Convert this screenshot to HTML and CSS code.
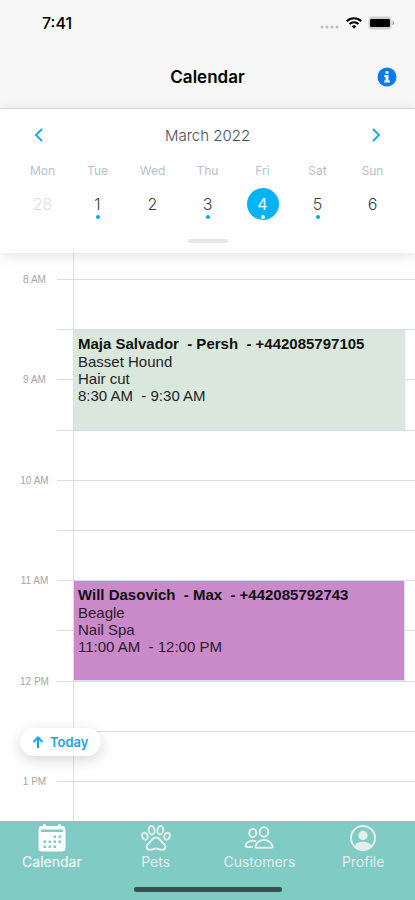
FILE: index.html
```html
<!DOCTYPE html>
<html lang="en">
<head>
<meta charset="utf-8">
<meta name="viewport" content="width=device-width, initial-scale=1">
<title>Calendar</title>
<link rel="stylesheet" href="styles.css">
</head>
<body>
<div class="app">
  <header class="header">
    <div class="status">
      <span class="clock">7:41</span>
      <div class="status-icons">
        <svg class="signal" width="20" height="4" viewBox="0 0 20 4" fill="#bcbcbc"><circle cx="2" cy="2" r="1.5"/><circle cx="7" cy="2" r="1.5"/><circle cx="12" cy="2" r="1.5"/><circle cx="17" cy="2" r="1.5"/></svg>
        <svg width="16" height="12" viewBox="0 0 16 12" fill="none" stroke="#000" stroke-width="2"><path d="M.8 4.3a10.3 10.3 0 0 1 14.4 0M3.5 7a6.5 6.5 0 0 1 9 0"/><path d="M5.7 9.3a3.4 3.4 0 0 1 4.6 0L8 11.7z" fill="#000" stroke="none"/></svg>
        <svg width="27" height="14" viewBox="0 0 27 14"><rect x=".5" y=".5" width="23" height="13" rx="4" fill="#cfcfcf"/><path d="M24.5 4.5c2 .7 2 4.300 0 5z" fill="#a8a8a8"/><rect x="2" y="3" width="20" height="8" rx="1.500" fill="#000"/></svg>
      </div>
    </div>
    <div class="titlebar">
      <h1>Calendar</h1>
      <button class="info" type="button" aria-label="Information">
        <svg width="20" height="20" viewBox="0 0 20 20"><circle cx="10" cy="10" r="9.500" fill="#087cec"/><path d="M8.500 4.200h3v2.500h-3zM7.300 8h4.200v5.500h1.300v2H7.300v-2h1.300V10H7.300z" fill="#fff"/></svg>
      </button>
    </div>
  </header>

  <section class="week">
    <div class="month">
      <button type="button" aria-label="Previous week"><svg width="12" height="14" viewBox="0 0 12 14"><path d="M9 1 3 7l6 6"/></svg></button>
      <h2>March 2022</h2>
      <button type="button" aria-label="Next week"><svg width="12" height="14" viewBox="0 0 12 14"><path d="m3 1 6 6-6 6"/></svg></button>
    </div>
    <div class="days">
      <div class="day"><span class="name">Mon</span><button class="date muted" type="button">28</button></div>
      <div class="day"><span class="name">Tue</span><button class="date marked" type="button">1</button></div>
      <div class="day"><span class="name">Wed</span><button class="date" type="button">2</button></div>
      <div class="day"><span class="name">Thu</span><button class="date marked" type="button">3</button></div>
      <div class="day"><span class="name">Fri</span><button class="date marked selected" type="button">4</button></div>
      <div class="day"><span class="name">Sat</span><button class="date marked" type="button">5</button></div>
      <div class="day"><span class="name">Sun</span><button class="date" type="button">6</button></div>
    </div>
    <div class="knob"></div>
  </section>

  <main class="timeline">
    <div class="axis"></div>
    <span class="hour at-0800">8 AM</span><div class="line at-0800"></div>
    <div class="line at-0830"></div>
    <span class="hour at-0900">9 AM</span><div class="line at-0900"></div>
    <div class="line at-0930"></div>
    <span class="hour at-1000">10 AM</span><div class="line at-1000"></div>
    <div class="line at-1030"></div>
    <span class="hour at-1100">11 AM</span><div class="line at-1100"></div>
    <div class="line at-1130"></div>
    <span class="hour at-1200">12 PM</span><div class="line at-1200"></div>
    <div class="line at-1230"></div>
    <span class="hour at-1300">1 PM</span><div class="line at-1300"></div>
    <article class="event event-green">
      <h3>Maja Salvador&nbsp; - Persh&nbsp; - +442085797105</h3>
      <p>Basset Hound</p><p>Hair cut</p><p>8:30 AM&nbsp; - 9:30 AM</p>
    </article>
    <article class="event event-purple">
      <h3>Will Dasovich&nbsp; - Max&nbsp; - +442085792743</h3>
      <p>Beagle</p><p>Nail Spa</p><p>11:00 AM&nbsp; - 12:00 PM</p>
    </article>
    <button class="today" type="button">
      <svg width="12" height="12" viewBox="0 0 12 12"><path d="M6 12V1.500M1.500 6 6 1.500 10.500 6"/></svg>Today
    </button>
  </main>

  <nav class="tabs">
    <a class="tab active" href="#calendar">
      <svg width="28" height="28" viewBox="0 0 28 28"><path fill="#fff" d="M5 .5h3V2h12V.5h3V2h1a3.500 3.500 0 0 1 3.500 3.500V24a3.500 3.500 0 0 1-3.500 3.500H4A3.500 3.500 0 0 1 .5 24V5.500A3.500 3.500 0 0 1 4 2h1z"/><path fill="#80cbc4" d="M3 5.500h22V8H3z"/><g fill="#80cbc4"><path d="M15.500 11.500H18V14h-2.500zM20.500 11.500H23V14h-2.500zM5.500 16.500H8V19H5.500zM10.500 16.500H13V19h-2.500zM15.500 16.500H18V19h-2.500zM20.500 16.500H23V19h-2.500zM5.500 21.500H8V24H5.500zM10.500 21.500H13V24h-2.500zM15.500 21.500H18V24h-2.500z"/></g></svg>
      <span>Calendar</span>
    </a>
    <a class="tab" href="#pets">
      <svg width="30" height="28" viewBox="0 0 30 28" fill="none" stroke="#e3eeed" stroke-width="2"><ellipse cx="10.700" cy="6.200" rx="2.900" ry="4.200" transform="rotate(-9 10.700 6.200)"/><ellipse cx="19.300" cy="6.200" rx="2.900" ry="4.200" transform="rotate(9 19.300 6.200)"/><ellipse cx="3.900" cy="12.200" rx="2.700" ry="3.600" transform="rotate(-20 3.900 12.200)"/><ellipse cx="26.100" cy="12.200" rx="2.700" ry="3.600" transform="rotate(20 26.100 12.200)"/><path d="M15 13.500c-2.400 0-3.700 1.300-4.800 3.200-1 1.800-4.700 3.200-4.700 6 0 2 1.500 3.100 3.500 3.100 2.300 0 3.500-1.200 6-1.200s3.700 1.200 6 1.200c2 0 3.500-1.100 3.500-3.100 0-2.800-3.700-4.200-4.700-6-1.100-1.900-2.400-3.200-4.800-3.200z"/></svg>
      <span>Pets</span>
    </a>
    <a class="tab" href="#customers">
      <svg width="30" height="28" viewBox="0 0 30 28" fill="none" stroke="#e3eeed" stroke-width="2"><ellipse cx="20" cy="8" rx="4.300" ry="4.800"/><ellipse cx="8.800" cy="9" rx="3.600" ry="4"/><path d="M20 16c-4.800 0-8 3.200-8.500 6.200-.1 1 .4 1.600 1.500 1.600h14c1.100 0 1.600-.6 1.500-1.600C28 19.200 24.800 16 20 16zM12 17.500c-1-.6-2-.8-3.200-.8-4 0-6.800 2.500-7.200 5-.1.800.4 1.300 1.300 1.300H9"/></svg>
      <span>Customers</span>
    </a>
    <a class="tab" href="#profile">
      <svg width="28" height="28" viewBox="0 0 28 28"><circle cx="14" cy="14" r="12" fill="none" stroke="#e3eeed" stroke-width="2"/><circle cx="14" cy="11.500" r="4.700" fill="#e3eeed"/><path d="M5.500 22c1.300-3 4.500-4.300 8.500-4.300s7.200 1.300 8.500 4.300A12 12 0 0 1 14 26a12 12 0 0 1-8.500-4z" fill="#e3eeed"/></svg>
      <span>Profile</span>
    </a>
    <div class="home-indicator"></div>
  </nav>
</div>
</body>
</html>
```
FILE: styles.css
```css
* { box-sizing: border-box; }
body, h1, h2, h3, p { margin: 0; }
body { font-family: Inter, "Liberation Sans", sans-serif; background: #fff; }
button { padding: 0; border: 0; background: none; font: inherit; color: inherit; }
svg { display: block; }
.app { display: flex; flex-direction: column; min-height: 100vh; }

.header { height: 109px; background: #f7f7f7; border-bottom: 1px solid #dedede; }
.status { display: flex; justify-content: space-between; align-items: center; height: 46px; padding: 0 20px 0 42px; }
.clock { font-size: 16px; font-weight: 500; }
.status-icons { display: flex; align-items: center; gap: 6px; }
.signal { margin-top: 8px; }
.titlebar { display: grid; grid-template-columns: 1fr auto 1fr; align-items: center; height: 62px; padding: 0 18px; }
.titlebar h1 { grid-column: 2; font-size: 17px; font-weight: 600; line-height: 24px; }
.info { justify-self: end; }

.week { position: relative; z-index: 1; height: 144px; background: #fff; box-shadow: 0 2px 14px rgba(0, 0, 0, 0.12); }
.month { display: flex; justify-content: space-between; align-items: center; height: 52px; padding: 0 33px; }
.month h2 { font-size: 15px; font-weight: 300; color: #43515c; }
.month path { fill: none; stroke: #19ace6; stroke-width: 2; }
.days { display: grid; grid-template-columns: repeat(7, 1fr); padding: 0 15px; }
.day { display: flex; flex-direction: column; align-items: center; gap: 7px; }
.name { font-size: 12px; line-height: 20px; font-weight: 400; color: #b6c1cd; }
.date { position: relative; width: 32px; height: 32px; border-radius: 50%; font-size: 16px; font-weight: 300; color: #36424b; }
.muted { color: #d9e1e8; }
.marked::after { content: ""; position: absolute; left: 14px; bottom: 1px; width: 4px; height: 4px; border-radius: 50%; background: #00a8ec; }
.selected { background: #00b4f3; color: #fff; font-weight: 400; }
.selected::after { background: #fff; }
.knob { width: 40px; height: 4px; margin: 19px auto 0; border-radius: 2px; background: #e4e7e9; }

/* One grid row per half hour; the first and last rows are partly scrolled off. */
.timeline { position: relative; flex: 1; display: grid; grid-template-columns: 57px 16px 1fr 10px; grid-template-rows: 26px repeat(10, minmax(50px, 1fr)) 40px; }
.axis { grid-column: 3; grid-row: 1 / -1; width: 1px; background: #dcdfe2; }
.line { grid-column: 2 / -1; height: 1px; background: #dcdcdc; }
.hour { grid-column: 1; height: 14px; margin: -6px 0 0 12px; text-align: center; font: 10px/14px "Liberation Sans", Arial, sans-serif; color: #a5a5a5; }
.at-0800 { grid-row: 2; }
.at-0830 { grid-row: 3; }
.at-0900 { grid-row: 4; }
.at-0930 { grid-row: 5; }
.at-1000 { grid-row: 6; }
.at-1030 { grid-row: 7; }
.at-1100 { grid-row: 8; }
.at-1130 { grid-row: 9; }
.at-1200 { grid-row: 10; }
.at-1230 { grid-row: 11; }
.at-1300 { grid-row: 12; }
.event { z-index: 1; grid-column: 3; padding: 5px 0 0 4px; border: 1px solid #d8dff0; font: 15px/17px "Liberation Sans", Arial, sans-serif; color: #1f2422; }
.event h3 { font-size: 15px; font-weight: 700; line-height: 18px; color: #111; }
.event-green { grid-row: 3 / 5; background: #dae7dd; }
.event-purple { grid-row: 8 / 10; background: #ca89c9; color: #2a1a2a; }
.today { position: absolute; z-index: 2; left: 20px; bottom: 65px; display: flex; align-items: center; gap: 6px; height: 28px; padding: 0 12px; border-radius: 14px; background: #fff; box-shadow: 0 4px 14px rgba(0, 0, 0, 0.16); font-size: 13px; font-weight: 600; color: #19a5e0; }
.today path { fill: none; stroke: #19a5e0; stroke-width: 2; }

.tabs { position: relative; display: grid; grid-template-columns: repeat(4, 1fr); align-items: start; height: 79px; padding-top: 3px; background: #80cbc4; }
.tab { display: flex; flex-direction: column; align-items: center; color: #e3eeed; font-size: 14px; line-height: 20px; text-decoration: none; }
.active { color: #fff; }
.home-indicator { position: absolute; left: 50%; bottom: 8px; width: 148px; height: 5px; margin-left: -74px; border-radius: 3px; background: #34514e; }
```
